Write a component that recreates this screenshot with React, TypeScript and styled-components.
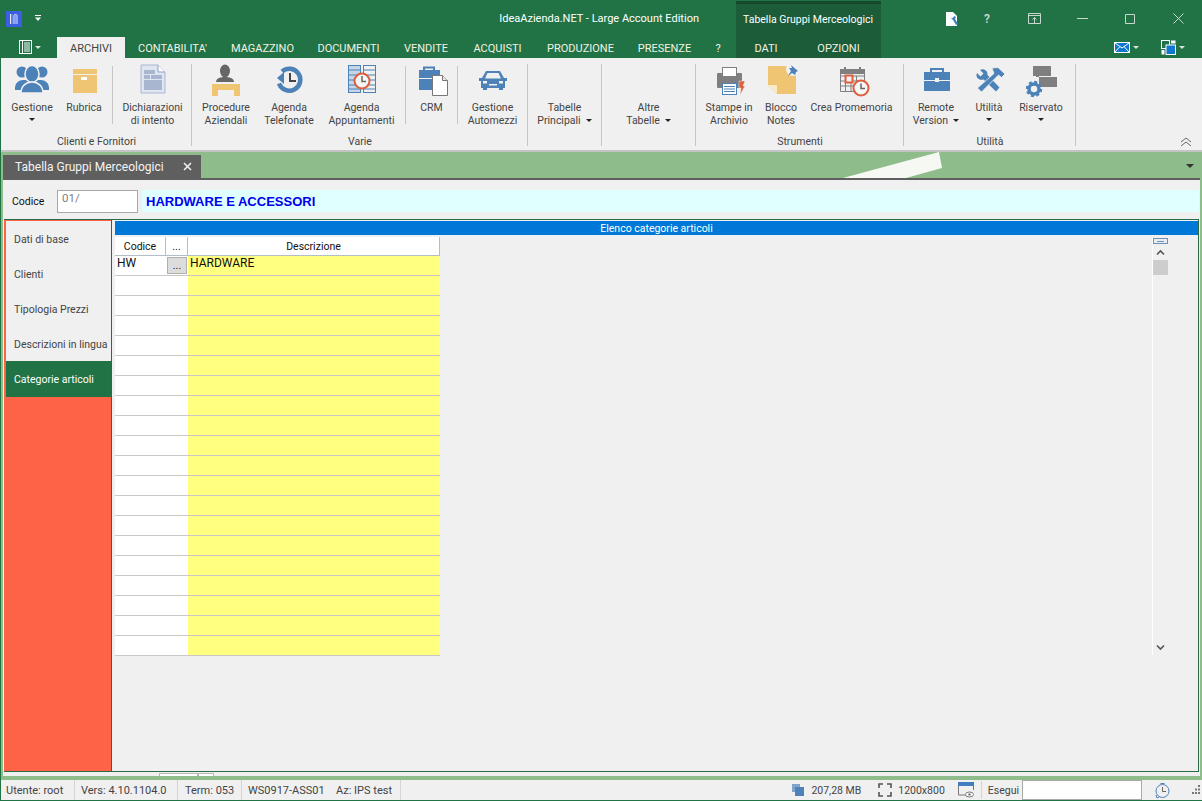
import React from 'react';
import styled, { createGlobalStyle } from 'styled-components';

const green = '#217346';
const blue = '#4d82b8';
const tan = '#efc472';
const gray = '#7f7f7f';
const red = '#dd5f3d';

const Global = createGlobalStyle`
  html, body { margin: 0; padding: 0; background: #f0f0f0; }
  * { box-sizing: border-box; }
`;

const Win = styled.div`
  width: 1202px;
  height: 801px;
  overflow: hidden;
  display: flex;
  flex-direction: column;
  font-family: Roboto, "Noto Sans", sans-serif;
  font-size: 10.5px;
  color: #444;
  background: ${green};
  position: relative;
`;

const Header = styled.header`
  height: 58px;
  display: flex;
  flex: none;
`;

const HeaderMain = styled.div`
  width: 736px;
  display: flex;
  flex-direction: column;
`;

const TitleRow = styled.div`
  height: 37px;
  display: flex;
  align-items: center;
  padding: 0 37px 0 6px;
  gap: 13px;
`;

const Title = styled.div`
  margin-left: auto;
  color: #fff;
  font-size: 11px;
  white-space: nowrap;
`;

const TabRow = styled.div`
  height: 21px;
  display: flex;
`;

const FileTab = styled.div`
  width: 57px;
  display: flex;
  align-items: center;
  padding: 0 0 1px 19px;
  gap: 3px;
`;

const RibbonTab = styled.div<{ $w: number; $active?: boolean }>`
  width: ${p => p.$w}px;
  display: flex;
  align-items: center;
  justify-content: center;
  font-size: 11px;
  white-space: nowrap;
  padding-top: 1px;
  background: ${p => (p.$active ? '#f0f0f0' : 'transparent')};
  color: ${p => (p.$active ? '#444' : '#f2f2e4')};
`;

const Context = styled.div`
  width: 145px;
  background: #1c5c38;
  border-top: 3px solid #17492d;
  margin-top: 1px;
  display: flex;
  flex-direction: column;
`;

const ContextTitle = styled.div`
  height: 33px;
  padding: 0 0 3px 7px;
  display: flex;
  align-items: center;
  color: #fff;
  font-size: 10.5px;
  white-space: nowrap;
`;

const HeaderRight = styled.div`
  flex: 1;
  display: flex;
  flex-direction: column;
`;

const WinControls = styled.div`
  height: 37px;
  display: flex;
  align-items: center;
  justify-content: flex-end;
`;

const Ctl = styled.div<{ $w: number }>`
  width: ${p => p.$w}px;
  height: 36px;
  display: flex;
  align-items: center;
  justify-content: center;
  color: #c8d8ce;
  font-size: 12px;
  font-weight: 600;
`;

const HeaderTools = styled.div`
  height: 21px;
  display: flex;
  align-items: center;
  justify-content: flex-end;
  gap: 3px;
  padding: 0 17px 1px 0;
`;

const ToolGap = styled.span`
  width: 16px;
`;

const WhiteCaret = styled.span`
  width: 0;
  height: 0;
  border: 3px solid transparent;
  border-top-color: #d8e4dc;
  border-bottom: 0;
`;

const Ribbon = styled.section`
  height: 94px;
  flex: none;
  background: #f0f0f0;
  border-bottom: 2px solid #c4c4c4;
  margin-left: 1px;
  display: flex;
  position: relative;
`;

const Group = styled.div<{ $w: number }>`
  width: ${p => p.$w}px;
  flex: none;
  padding-top: 6px;
  display: flex;
  flex-direction: column;
  position: relative;
  &::after {
    content: '';
    position: absolute;
    top: 6px;
    bottom: 4px;
    right: 0;
    width: 1px;
    background: #c6c6c6;
  }
`;

const Items = styled.div`
  height: 71px;
  display: flex;
`;

const GroupLabel = styled.div`
  text-align: center;
  line-height: 14px;
  color: #444;
`;

const Sep = styled.div`
  width: 1px;
  height: 58px;
  margin-top: 2px;
  flex: none;
  background: #c6c6c6;
`;

const Spacer = styled.span<{ $w: number }>`
  width: ${p => p.$w}px;
  flex: none;
`;

const Item = styled.div<{ $w: number }>`
  width: ${p => p.$w}px;
  flex: none;
  display: flex;
  flex-direction: column;
  align-items: center;
  white-space: nowrap;
`;

const IconBox = styled.div`
  height: 37px;
  flex: none;
`;

const Line = styled.div`
  line-height: 13px;
  display: flex;
  align-items: center;
  gap: 5px;
`;

const Caret = styled.span`
  width: 0;
  height: 0;
  border: 3px solid transparent;
  border-top-color: #222;
  border-bottom: 0;
`;

const CaretLine = styled.div`
  height: 11px;
  display: flex;
  align-items: center;
  justify-content: center;
`;

const Collapse = styled.div`
  position: absolute;
  right: 10px;
  bottom: 3px;
  width: 12px;
  height: 10px;
`;

const Workspace = styled.div`
  flex: 1;
  min-height: 0;
  background: #8fbc8b;
  margin-left: 1px;
  display: flex;
  flex-direction: column;
  position: relative;
`;

const DocStrip = styled.div`
  height: 26px;
  flex: none;
  padding: 3px 0 0 2px;
  display: flex;
`;

const DocTab = styled.div`
  width: 198px;
  background: #5f5f5f;
  color: #f4f4f4;
  font-size: 12px;
  display: flex;
  align-items: center;
  justify-content: space-between;
  padding: 0 9px 0 12px;
  white-space: nowrap;
`;

const Streak = styled.div`
  position: absolute;
  left: 842px;
  top: 0;
  width: 100px;
  height: 26px;
  background: #f6f8f4;
  clip-path: polygon(0 26px, 96px 0, 99px 16px, 63px 26px);
`;

const StripCaret = styled.div`
  position: absolute;
  right: 8px;
  top: 12px;
  width: 0;
  height: 0;
  border: 4px solid transparent;
  border-top: 4px solid #333;
  border-bottom: 0;
`;

const Panel = styled.main`
  flex: 1;
  min-height: 0;
  margin: 0 2px 0 2px;
  border-top: 2px solid #5f5f5f;
  padding: 0 1px 0 1px;
  background: #f0f0f0;
  display: flex;
  flex-direction: column;
`;

const CodeRow = styled.div`
  height: 39px;
  flex: none;
  display: flex;
  align-items: flex-start;
  padding: 10px 0 0 8px;
`;

const CodeLabel = styled.div`
  width: 45px;
  color: #111;
  line-height: 23px;
`;

const CodeInput = styled.div`
  width: 81px;
  height: 23px;
  background: #fff;
  border: 1px solid #a8a8a8;
  color: #808080;
  padding: 0 0 0 4px;
  line-height: 14px;
  font-size: 11.5px;
`;

const CodeName = styled.div`
  flex: 1;
  height: 22px;
  margin-left: 4px;
  background: #e0ffff;
  color: #0000ee;
  font-family: "Liberation Sans", sans-serif;
  font-weight: 700;
  font-size: 13px;
  line-height: 23px;
  padding-left: 4px;
`;

const Body = styled.div`
  flex: 1;
  min-height: 0;
  display: flex;
  border-top: 1px solid #2a6a45;
  border-right: 1px solid #2a6a45;
  border-bottom: 1px solid #2a6a45;
`;

const Sidebar = styled.nav`
  width: 108px;
  flex: none;
  background: #ff6347;
  border-right: 1px solid #2a6a45;
  padding: 1px 0 0 2px;
  display: flex;
  flex-direction: column;
`;

const NavItem = styled.div<{ $active?: boolean }>`
  height: ${p => (p.$active ? 36 : 35)}px;
  flex: none;
  display: flex;
  align-items: center;
  padding: ${p => (p.$active ? 0 : 2)}px 0 0 8px;
  white-space: nowrap;
  background: ${p => (p.$active ? green : '#f0f0f0')};
  color: ${p => (p.$active ? '#fff' : '#444')};
`;

const Content = styled.div`
  flex: 1;
  min-width: 0;
  padding: 1px 0 0 3px;
  display: flex;
  flex-direction: column;
`;

const BlueBar = styled.div`
  height: 14px;
  flex: none;
  background: #0078d7;
  color: #fff;
  text-align: center;
  line-height: 15px;
`;

const ContentInner = styled.div`
  flex: 1;
  display: flex;
  justify-content: space-between;
  padding-top: 2px;
`;

const Grid = styled.div`
  width: 325px;
  display: flex;
  flex-direction: column;
`;

const GridHead = styled.div`
  height: 19px;
  display: grid;
  grid-template-columns: 51px 22px 252px;
  grid-template-rows: 19px;
  background: #fff;
`;

const HeadCell = styled.div`
  text-align: center;
  color: #111;
  padding-top: 1px;
  line-height: 18px;
  overflow: hidden;
  border-right: 1px solid #b4bec8;
  border-bottom: 1px solid #b4bec8;
`;

const GridRow = styled.div`
  height: 20px;
  display: grid;
  grid-template-columns: 51px 22px 252px;
  grid-template-rows: 20px;
  background: #fff;
`;

const Cell = styled.div<{ $yellow?: boolean }>`
  border-bottom: 1px solid #c8c8c8;
  background: ${p => (p.$yellow ? '#ffff80' : '#fff')};
  color: #111;
  padding-left: 2px;
  line-height: 14px;
  font-size: 12px;
`;

const MoreCell = styled.div`
  border-bottom: 1px solid #c8c8c8;
  padding: 1px;
  display: flex;
  min-height: 0;
`;

const MoreBtn = styled.div`
  flex: 1;
  background: #dcdcdc;
  border: 1px solid #b0b0b0;
  color: #222;
  text-align: center;
  line-height: 15px;
`;

const Scroll = styled.div`
  width: 16px;
  margin-right: 30px;
  border-left: 1px solid #fff;
  display: flex;
  flex-direction: column;
  align-items: center;
  height: 418px;
`;

const ScrollMark = styled.div`
  width: 15px;
  height: 6px;
  margin-top: 1px;
  border: 1px solid #6f93b8;
  background: linear-gradient(#6f93b8, #6f93b8) center / 7px 1px no-repeat #e8eef4;
`;

const ScrollThumb = styled.div`
  width: 15px;
  height: 15px;
  margin-top: 4px;
  background: #cdcdcd;
`;

const ScrollDown = styled.div`
  margin-top: auto;
  height: 14px;
`;

const ScrollUp = styled.div`
  margin-top: 5px;
  height: 7px;
  display: flex;
`;

const BottomStrip = styled.div`
  height: 4px;
  flex: none;
  display: flex;
  padding: 1px 0 0 155px;
`;

const MiniTab = styled.div<{ $w: number }>`
  width: ${p => p.$w}px;
  height: 3px;
  border: 1px solid #b8b8b8;
  border-bottom: 0;
  background: #fff;
`;

const GreenGap = styled.div`
  height: 4px;
  flex: none;
`;

const StatusBar = styled.footer`
  height: 21px;
  flex: none;
  margin-left: 1px;
  background: #f0f0f0;
  border-bottom: 1px solid ${green};
  display: flex;
  align-items: center;
  font-size: 11px;
  color: #444;
  white-space: nowrap;
`;

const Stat = styled.div<{ $w: number; $sep?: boolean; $pl?: number }>`
  width: ${p => p.$w}px;
  height: 100%;
  flex: none;
  display: flex;
  align-items: center;
  padding-left: ${p => p.$pl ?? 6}px;
  border-right: ${p => (p.$sep ? '1px solid #d4d4d4' : '0')};
`;

const StatRight = styled.div`
  margin-left: auto;
  height: 100%;
  display: flex;
  align-items: center;
  font-size: 10.5px;
`;

const RunInput = styled.div`
  width: 120px;
  height: 20px;
  background: #fff;
  border: 1px solid #aaa;
  margin: 0 13px 0 3px;
`;

const StatText = styled.span<{ $ml?: number; $mr?: number }>`
  margin-left: ${p => p.$ml ?? 0}px;
  margin-right: ${p => p.$mr ?? 0}px;
`;

const StatSep = styled.div`
  width: 1px;
  height: 18px;
  background: #d4d4d4;
  margin: 0 6px 0 7px;
`;

const Ico: React.FC<{ children: React.ReactNode }> = ({ children }) => (
  <svg width="40" height="36" viewBox="0 0 40 36">{children}</svg>
);

const PeopleIcon = () => (
  <Ico>
    <g fill={blue}>
      <circle cx="10" cy="8" r="5.5" />
      <circle cx="30" cy="8" r="5.5" />
      <path d="M3 24c0-5 4-8 8-8h18c4 0 8 3 8 8v2H3z" />
    </g>
    <g fill={blue} stroke="#f0f0f0" strokeWidth="1.5">
      <ellipse cx="20" cy="10" rx="7" ry="8.5" />
      <path d="M9 29c0-7 5-11 11-11s11 4 11 11z" />
    </g>
  </Ico>
);

const BoxIcon = () => (
  <Ico>
    <rect x="9" y="5" width="24" height="5" fill={tan} />
    <rect x="9" y="11" width="24" height="18" fill={tan} />
    <rect x="17" y="13" width="6" height="3" fill="#fff" />
  </Ico>
);

const DeclarationIcon = () => (
  <Ico>
    <path d="M8 1h17l7 7v21H8z" fill="#dfe6f2" stroke="#a9b7d2" />
    <path d="M25 1v7h7" fill="#fff" stroke="#8e9fc0" />
    <rect x="11" y="6" width="11" height="4" fill="#a9b6cf" />
    <rect x="11" y="11" width="6" height="4" fill="#a9b6cf" />
    <rect x="18" y="11" width="11" height="4" fill="#a9b6cf" />
    <rect x="11" y="16" width="18" height="10" fill="#a9b6cf" />
  </Ico>
);

const ProcedureIcon = () => (
  <Ico>
    <ellipse cx="19" cy="7" rx="5" ry="6.5" fill="#666" />
    <path d="M10 18c0-4 5-5 9-5s9 1 9 5z" fill="#666" />
    <path d="M6 20h28v12h-6v-6H12v6H6z" fill={tan} />
  </Ico>
);

const HistoryIcon = () => (
  <Ico>
    <path d="M13 7.5a11 11 0 1 1-3 12" fill="none" stroke={blue} strokeWidth="4.5" />
    <path d="M8 14l7-6v12z" fill={blue} />
    <path d="M21 9v8h6" fill="none" stroke="#444" strokeWidth="2" />
  </Ico>
);

const ScheduleIcon = () => (
  <Ico>
    <rect x="6.5" y="1.5" width="12" height="27" fill="#c4d6e8" stroke={blue} />
    <rect x="21.5" y="1.5" width="12" height="27" fill="#f0f0f0" stroke={blue} />
    <path d="M7 6h11M7 11h11M7 16h11M7 21h11M7 25h11M22 6h11M22 11h11M22 16h11M22 21h11M22 25h11" stroke={blue} />
    <circle cx="20" cy="17" r="7.5" fill="#f6f6f6" stroke={red} strokeWidth="2" />
    <path d="M20 12v5.5h4" fill="none" stroke="#666" strokeWidth="1.5" />
  </Ico>
);

const CrmIcon = () => (
  <Ico>
    <path d="M12 6V3.5h10V6" fill="none" stroke={blue} strokeWidth="2" />
    <rect x="7" y="6" width="21" height="8" fill={blue} />
    <rect x="7" y="15" width="21" height="11" fill={blue} />
    <path d="M20.5 11.5h10l5 5v15h-15z" fill="#fff" stroke="#777" />
    <path d="M30.5 11.5v5h5" fill="#e8e8e8" stroke="#777" />
  </Ico>
);

const CarIcon = () => (
  <Ico>
    <path d="M13 7h14l4 7h3v3h-2v7h-2v2h-4v-2H14v2h-4v-2H8v-7H6v-3h3z" fill={blue} />
    <path d="M14.5 9h11l2.5 5.5H12z" fill="#f0f0f0" />
    <rect x="10" y="17" width="4" height="2.5" fill="#f0f0f0" />
    <rect x="26" y="17" width="4" height="2.5" fill="#f0f0f0" />
    <rect x="16" y="20" width="8" height="1.5" fill="#f0f0f0" />
  </Ico>
);

const PrinterIcon = () => (
  <Ico>
    <rect x="8" y="9" width="25" height="15" rx="1" fill={gray} />
    <rect x="13.5" y="3.5" width="14" height="9" fill="#fff" stroke={gray} />
    <rect x="13.5" y="19.5" width="14" height="11" fill="#fff" stroke={blue} />
    <path d="M15 22.5h11M15 25h11M15 27.5h11" stroke={blue} />
    <path d="M30 17h6l-2 5h2l-5 9 1-7h-2z" fill={red} stroke="#f0f0f0" strokeWidth="0.5" />
  </Ico>
);

const NoteIcon = () => (
  <Ico>
    <path d="M7 2h28v28H16l-9-9z" fill={tan} />
    <path d="M7 21h9v9z" fill="#f9e9c4" />
    <circle cx="32" cy="5" r="7" fill="#f0f0f0" />
    <path d="M30 1l7 6-2 1-1 3-3-2-4 3 3-5-2-3 3 0z" fill={blue} />
  </Ico>
);

const ReminderIcon = () => (
  <Ico>
    <path d="M8.5 6.5h24v21h-24zM8.5 12h24M8.5 17h24M8.5 22h24M13.5 12v15.5M19 12v15.5M24.5 12v15.5" fill="none" stroke={gray} />
    <path d="M8 5h25v5H8z" fill={gray} />
    <path d="M13 3v4M28 3v4" stroke={gray} strokeWidth="2" />
    <rect x="13.5" y="11.5" width="7" height="7" fill="#f0f0f0" stroke={red} strokeWidth="2" />
    <circle cx="29" cy="24" r="7.5" fill="#f6f6f6" stroke={red} strokeWidth="2" />
    <path d="M29 19.5v5h4" fill="none" stroke="#666" strokeWidth="1.5" />
  </Ico>
);

const CaseIcon = () => (
  <Ico>
    <path d="M15 8V5h12v3" fill="none" stroke={blue} strokeWidth="2" />
    <rect x="8" y="8" width="26" height="8" fill={blue} />
    <rect x="8" y="17" width="26" height="10" fill={blue} />
    <rect x="19" y="14" width="4" height="4" fill="#f0f0f0" />
  </Ico>
);

const ToolsIcon = () => (
  <Ico>
    <path d="M8 9l3.5 3.5 3-3L11 6c4-2 8 1 7.5 5l12 12.5-3.5 4L14.5 15.5C10 17 6 13 8 9z" fill={blue} />
    <path d="M23 4l6-0.5 7 6.5-3.5 3.5-3-2.5L12.5 28 8.5 24l16.5-14.5z" fill={blue} stroke="#f0f0f0" strokeWidth="0.8" />
  </Ico>
);

const ReservedIcon = () => (
  <Ico>
    <rect x="12" y="2" width="18" height="10" fill={gray} />
    <rect x="18" y="13" width="18" height="10" fill={gray} />
    <rect x="15" y="12" width="3" height="1" fill={gray} />
    <circle cx="13" cy="25" r="5" fill="none" stroke={blue} strokeWidth="3.5" />
    <circle cx="13" cy="25" r="7" fill="none" stroke={blue} strokeWidth="2.5" strokeDasharray="3 2.5" />
  </Ico>
);

const Chevron: React.FC<{ down?: boolean }> = ({ down }) => (
  <svg width="9" height="7" viewBox="0 0 9 7">
    <path d={down ? 'M1 1.5l3.5 3.5L8 1.5' : 'M1 5.5L4.5 2 8 5.5'} fill="none" stroke="#555" strokeWidth="1.6" />
  </svg>
);

const AppLogo = () => (
  <svg width="16" height="16" viewBox="0 0 16 16">
    <rect width="16" height="16" fill="#3b5fe0" />
    <path d="M4.5 3v10M8 13V4.5C8 3 11 3 11 4.5V13" fill="none" stroke="#e8ecf8" strokeWidth="1" />
    <path d="M6 3v10M9.5 3v10" stroke="#a9b8e8" strokeWidth="0.7" />
  </svg>
);

const QuickCaret = () => (
  <svg width="6" height="7" viewBox="0 0 6 7">
    <path d="M0 0h6v1H0z M0 2.5h6L3 6z" fill="#fff" />
  </svg>
);

const FileIcon = () => (
  <svg width="13" height="14" viewBox="0 0 13 14">
    <rect x="0.5" y="0.5" width="12" height="13" fill="none" stroke="#fff" />
    <path d="M3.5 1v12" stroke="#fff" />
    <path d="M5 3h6M5 5h6M5 7h6M5 9h6M5 11h6" stroke="#fff" />
  </svg>
);

const DocToolIcon = () => (
  <svg width="14" height="16" viewBox="0 0 14 16">
    <path d="M1 1h7l4 4v10H1z" fill="#fff" />
    <path d="M6 7l2 2 3 5 2-1-3-5 1-2-2-1-1 2z" fill="#3f7fc0" />
  </svg>
);

const RestoreIcon = () => (
  <svg width="13" height="11" viewBox="0 0 13 11">
    <path d="M.5.5h12v10H.5zM1 2.5h11" fill="none" stroke="#c8d8ce" />
    <path d="M6.5 10V4.5M4.5 6.5l2-2 2 2" fill="none" stroke="#c8d8ce" />
  </svg>
);

const MinIcon = () => (
  <svg width="11" height="11" viewBox="0 0 11 11"><path d="M0 5.5h11" stroke="#c8d8ce" /></svg>
);

const MaxIcon = () => (
  <svg width="10" height="10" viewBox="0 0 10 10"><path d="M.5.5h9v9h-9z" fill="none" stroke="#c8d8ce" /></svg>
);

const CloseIcon = () => (
  <svg width="11" height="11" viewBox="0 0 11 11"><path d="M.5.5l10 10M10.5.5l-10 10" stroke="#c8d8ce" /></svg>
);

const MailIcon = () => (
  <svg width="16" height="11" viewBox="0 0 16 11">
    <rect x="0.5" y="0.5" width="15" height="10" fill="#0e78d0" stroke="#fff" />
    <path d="M1 1l7 5 7-5M1 10l5-5.5M15 10l-5-5.5" fill="none" stroke="#fff" />
  </svg>
);

const WindowsIcon = () => (
  <svg width="15" height="15" viewBox="0 0 15 15">
    <rect x="0.5" y="0.5" width="8" height="8" fill={green} stroke="#fff" />
    <rect x="5" y="5" width="9.5" height="9.5" fill="#0e78d0" stroke="#fff" />
    <rect x="10" y="0.5" width="4.5" height="3" fill="#fff" />
    <rect x="0.5" y="10" width="3" height="4.5" fill="#fff" />
  </svg>
);

const CloseTab = () => (
  <svg width="9" height="9" viewBox="0 0 9 9">
    <path d="M1 1l7 7M8 1L1 8" stroke="#eee" strokeWidth="1.6" />
  </svg>
);

const CollapseIcon = () => (
  <svg width="12" height="10" viewBox="0 0 12 10">
    <path d="M1 5l5-4 5 4M1 9l5-4 5 4" fill="none" stroke="#666" />
  </svg>
);

const MemIcon = () => (
  <svg width="12" height="12" viewBox="0 0 12 12">
    <rect width="8" height="8" fill="#7fa5cf" />
    <rect x="3" y="3" width="9" height="9" fill="#4d82b8" />
  </svg>
);

const ScreenIcon = () => (
  <svg width="14" height="14" viewBox="0 0 14 14">
    <path d="M1 5V1h4M9 1h4v4M13 9v4H9M5 13H1V9" fill="none" stroke="#555" strokeWidth="1.6" />
  </svg>
);

const PreviewIcon = () => (
  <svg width="16" height="16" viewBox="0 0 16 16">
    <path d="M.5 1v12H8M15.5 1v7" fill="none" stroke="#777" />
    <rect width="16" height="4" fill="#3f7fc0" />
    <ellipse cx="11.5" cy="12.5" rx="4" ry="2.5" fill="#fff" stroke="#777" />
    <circle cx="11.5" cy="12.5" r="1.2" fill="#777" />
  </svg>
);

const TimerIcon = () => (
  <svg width="15" height="18" viewBox="0 0 15 18">
    <circle cx="7.5" cy="10" r="6.5" fill="none" stroke="#4d82b8" />
    <path d="M7.5 6v4.5H11" fill="none" stroke="#666" />
    <path d="M5.5 2.5h4M1 14l1 3 2-1" fill="none" stroke="#4d82b8" />
  </svg>
);

const Grip = () => (
  <svg width="10" height="10" viewBox="0 0 10 10">
    <path d="M7 0h2v2H7zM4 3.5h2v2H4zM7 3.5h2v2H7zM1 7h2v2H1zM4 7h2v2H4zM7 7h2v2H7z" fill="#777" />
  </svg>
);

const tabs: [string, number][] = [
  ["CONTABILITA'", 95],
  ['MAGAZZINO', 85],
  ['DOCUMENTI', 87],
  ['VENDITE', 68],
  ['ACQUISTI', 75],
  ['PRODUZIONE', 91],
  ['PRESENZE', 77],
  ['?', 30],
];

const nav = ['Dati di base', 'Clienti', 'Tipologia Prezzi', 'Descrizioni in lingua', 'Categorie articoli'];

const RibbonItem: React.FC<{
  w: number;
  icon?: React.ReactNode;
  lines: string[];
  caret?: 'below' | 'inline';
}> = ({ w, icon, lines, caret }) => (
  <Item $w={w}>
    <IconBox>{icon}</IconBox>
    {lines.map((l, i) => (
      <Line key={l}>
        {l}
        {caret === 'inline' && i === lines.length - 1 && <Caret />}
      </Line>
    ))}
    {caret === 'below' && (
      <CaretLine>
        <Caret />
      </CaretLine>
    )}
  </Item>
);

export default function App() {
  return (
    <Win>
      <Global />
      <Header>
        <HeaderMain>
          <TitleRow>
            <AppLogo />
            <QuickCaret />
            <Title>IdeaAzienda.NET - Large Account Edition</Title>
          </TitleRow>
          <TabRow>
            <FileTab>
              <FileIcon />
              <WhiteCaret />
            </FileTab>
            <RibbonTab $w={68} $active>ARCHIVI</RibbonTab>
            {tabs.map(([t, w]) => (
              <RibbonTab key={t} $w={w}>{t}</RibbonTab>
            ))}
          </TabRow>
        </HeaderMain>
        <Context>
          <ContextTitle>Tabella Gruppi Merceologici</ContextTitle>
          <TabRow>
            <RibbonTab $w={60}>DATI</RibbonTab>
            <RibbonTab $w={85}>OPZIONI</RibbonTab>
          </TabRow>
        </Context>
        <HeaderRight>
          <WinControls>
            <Ctl $w={24}><DocToolIcon /></Ctl>
            <Ctl $w={46}>?</Ctl>
            <Ctl $w={48}><RestoreIcon /></Ctl>
            <Ctl $w={48}><MinIcon /></Ctl>
            <Ctl $w={48}><MaxIcon /></Ctl>
            <Ctl $w={48}><CloseIcon /></Ctl>
          </WinControls>
          <HeaderTools>
            <MailIcon />
            <WhiteCaret />
            <ToolGap />
            <WindowsIcon />
            <WhiteCaret />
          </HeaderTools>
        </HeaderRight>
      </Header>

      <Ribbon>
        <Group $w={191}>
          <Items>
            <Spacer $w={5} />
            <RibbonItem w={52} icon={<PeopleIcon />} lines={['Gestione']} caret="below" />
            <RibbonItem w={52} icon={<BoxIcon />} lines={['Rubrica']} />
            <Spacer $w={2} />
            <Sep />
            <RibbonItem w={79} icon={<DeclarationIcon />} lines={['Dichiarazioni', 'di intento']} />
          </Items>
          <GroupLabel>Clienti e Fornitori</GroupLabel>
        </Group>
        <Group $w={336}>
          <Items>
            <RibbonItem w={68} icon={<ProcedureIcon />} lines={['Procedure', 'Aziendali']} />
            <RibbonItem w={58} icon={<HistoryIcon />} lines={['Agenda', 'Telefonate']} />
            <RibbonItem w={87} icon={<ScheduleIcon />} lines={['Agenda', 'Appuntamenti']} />
            <Sep />
            <RibbonItem w={51} icon={<CrmIcon />} lines={['CRM']} />
            <Sep />
            <RibbonItem w={69} icon={<CarIcon />} lines={['Gestione', 'Automezzi']} />
          </Items>
          <GroupLabel>Varie</GroupLabel>
        </Group>
        <Group $w={74}>
          <Items>
            <RibbonItem w={73} lines={['Tabelle', 'Principali']} caret="inline" />
          </Items>
        </Group>
        <Group $w={94}>
          <Items>
            <RibbonItem w={93} lines={['Altre', 'Tabelle']} caret="inline" />
          </Items>
        </Group>
        <Group $w={208}>
          <Items>
            <RibbonItem w={66} icon={<PrinterIcon />} lines={['Stampe in', 'Archivio']} />
            <RibbonItem w={38} icon={<NoteIcon />} lines={['Blocco', 'Notes']} />
            <RibbonItem w={103} icon={<ReminderIcon />} lines={['Crea Promemoria']} />
          </Items>
          <GroupLabel>Strumenti</GroupLabel>
        </Group>
        <Group $w={172}>
          <Items>
            <RibbonItem w={64} icon={<CaseIcon />} lines={['Remote', 'Version']} caret="inline" />
            <RibbonItem w={42} icon={<ToolsIcon />} lines={['Utilità']} caret="below" />
            <RibbonItem w={62} icon={<ReservedIcon />} lines={['Riservato']} caret="below" />
          </Items>
          <GroupLabel>Utilità</GroupLabel>
        </Group>
        <Collapse><CollapseIcon /></Collapse>
      </Ribbon>

      <Workspace>
        <DocStrip>
          <DocTab>
            Tabella Gruppi Merceologici
            <CloseTab />
          </DocTab>
        </DocStrip>
        <Streak />
        <StripCaret />
        <Panel>
          <CodeRow>
            <CodeLabel>Codice</CodeLabel>
            <CodeInput>01/</CodeInput>
            <CodeName>HARDWARE E ACCESSORI</CodeName>
          </CodeRow>
          <Body>
            <Sidebar>
              {nav.map((n, i) => (
                <NavItem key={n} $active={i === nav.length - 1}>{n}</NavItem>
              ))}
            </Sidebar>
            <Content>
              <BlueBar>Elenco categorie articoli</BlueBar>
              <ContentInner>
                <Grid>
                  <GridHead>
                    <HeadCell>Codice</HeadCell>
                    <HeadCell>...</HeadCell>
                    <HeadCell>Descrizione</HeadCell>
                  </GridHead>
                  {Array.from({ length: 20 }, (_, i) => (
                    <GridRow key={i}>
                      <Cell>{i === 0 ? 'HW' : ''}</Cell>
                      {i === 0 ? (
                        <MoreCell><MoreBtn>...</MoreBtn></MoreCell>
                      ) : (
                        <Cell />
                      )}
                      <Cell $yellow>{i === 0 ? 'HARDWARE' : ''}</Cell>
                    </GridRow>
                  ))}
                </Grid>
                <Scroll>
                  <ScrollMark />
                  <ScrollUp><Chevron /></ScrollUp>
                  <ScrollThumb />
                  <ScrollDown><Chevron down /></ScrollDown>
                </Scroll>
              </ContentInner>
            </Content>
          </Body>
          <BottomStrip>
            <MiniTab $w={39} />
            <MiniTab $w={16} />
          </BottomStrip>
        </Panel>
        <GreenGap />
      </Workspace>

      <StatusBar>
        <Stat $w={74} $sep $pl={5}>Utente: root</Stat>
        <Stat $w={103} $sep>Vers: 4.10.1104.0</Stat>
        <Stat $w={64} $sep $pl={7}>Term: 053</Stat>
        <Stat $w={88}>WS0917-ASS01</Stat>
        <Stat $w={71} $sep>Az: IPS test</Stat>
        <StatRight>
          <MemIcon />
          <StatText $ml={7} $mr={17}>207,28 MB</StatText>
          <ScreenIcon />
          <StatText $ml={6} $mr={13}>1200x800</StatText>
          <PreviewIcon />
          <StatSep />
          <StatText>Esegui</StatText>
          <RunInput />
          <TimerIcon />
          <Spacer $w={21} />
          <Grip />
          <Spacer $w={1} />
        </StatRight>
      </StatusBar>
    </Win>
  );
}
